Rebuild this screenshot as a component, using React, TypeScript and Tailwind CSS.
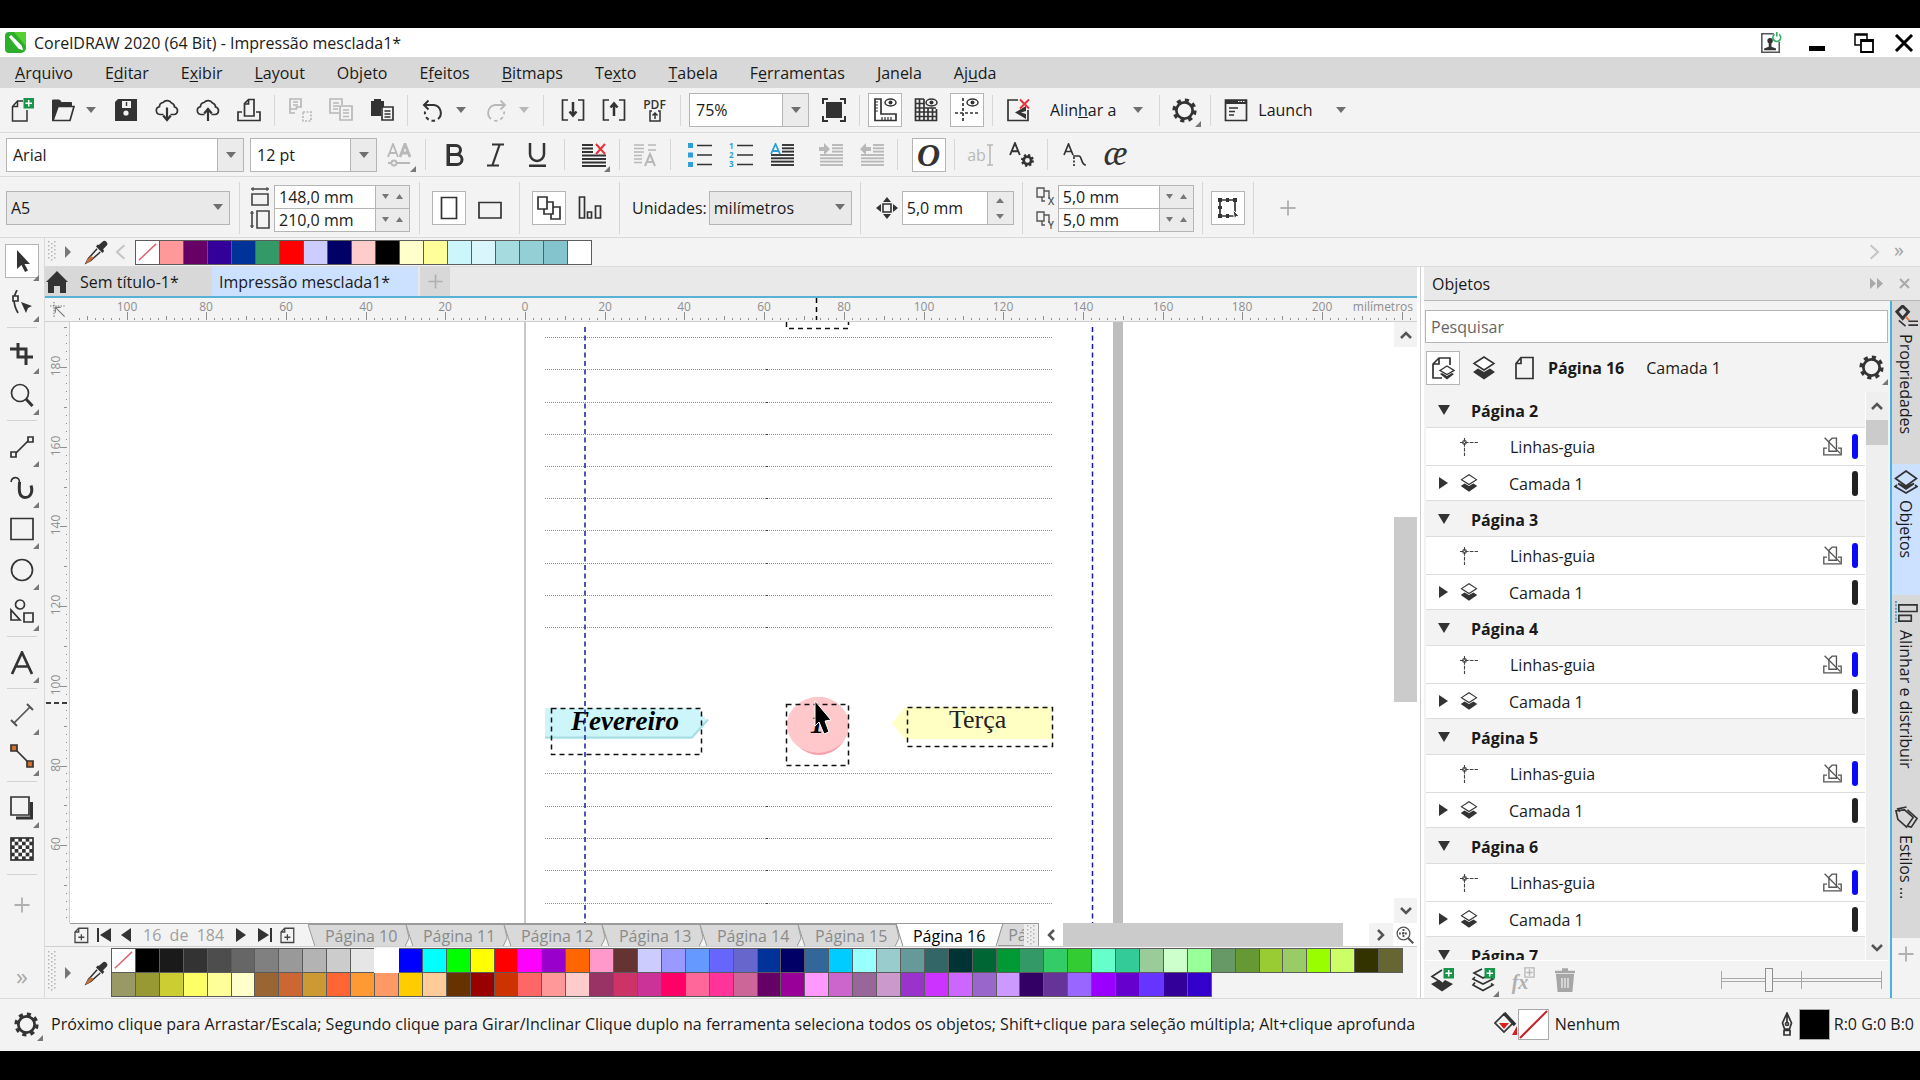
import React from "react";

const DARK = "#333333";
const GREY = "#b8b8b8";

type SvgProps = { children?: React.ReactNode; size?: number; color?: string; sw?: number; className?: string };

function Ic({ children, size = 24, color = DARK, sw = 1.7, className }: SvgProps) {
  return (
    <svg className={className} width={size} height={size} viewBox="0 0 24 24" fill="none" stroke={color} strokeWidth={sw} aria-hidden="true">
      {children}
    </svg>
  );
}

function Down({ color = "#6f6f6f" }: { color?: string }) {
  return (
    <svg width="10" height="6" viewBox="0 0 10 6" aria-hidden="true">
      <path d="M0 0h10L5 6z" fill={color} />
    </svg>
  );
}

function Flyout() {
  return (
    <svg className="absolute right-1 bottom-0" width="6" height="6" viewBox="0 0 6 6" aria-hidden="true">
      <path d="M6 0v6H0z" fill="#777" />
    </svg>
  );
}

function Cell({ label, children, on, flyout, className = "" }: { label: string; children: React.ReactNode; on?: boolean; flyout?: boolean; className?: string }) {
  return (
    <button type="button" aria-label={label} className={`relative flex h-[34px] w-[41px] shrink-0 items-center justify-center ${className}`}>
      {on ? <span className="flex h-[34px] w-[34px] items-center justify-center border border-[#b5b5b5] bg-white">{children}</span> : children}
      {flyout && <Flyout />}
    </button>
  );
}

function Arrow({ label, color }: { label: string; color?: string }) {
  return (
    <button type="button" aria-label={label} className="mr-1.5 flex h-8 w-4 shrink-0 items-center justify-center">
      <Down color={color} />
    </button>
  );
}

function Sep({ tall }: { tall?: boolean }) {
  return (
    <div className="flex w-2.5 shrink-0 justify-center">
      <div className={tall ? "h-[52px] w-px bg-[#d6d6d6]" : "h-[31px] w-px bg-[#d6d6d6]"} />
    </div>
  );
}

function Combo({ label, value, className }: { label: string; value: string; className: string }) {
  return (
    <div className={`flex h-[34px] shrink-0 border border-[#b5b5b5] bg-white ${className}`}>
      <input aria-label={label} defaultValue={value} className="min-w-0 flex-1 px-1.5 outline-none" />
      <button type="button" aria-label={`${label}: abrir lista`} className="flex w-[26px] items-center justify-center border-l border-[#b5b5b5] bg-[#ebebeb]">
        <Down />
      </button>
    </div>
  );
}

function Select({ id, value, className }: { id: string; value: string; className: string }) {
  return (
    <div className={`relative h-[34px] shrink-0 border border-[#b5b5b5] bg-[#e9e9e9] ${className}`}>
      <select id={id} aria-label={id} className="h-full w-full appearance-none bg-transparent px-1 outline-none">
        <option>{value}</option>
      </select>
      <span className="pointer-events-none absolute top-3 right-1.5">
        <Down />
      </span>
    </div>
  );
}

function PairInputs({ a, b, va, vb }: { a: string; b: string; va: string; vb: string }) {
  return (
    <div className="w-[136px] shrink-0 border border-[#b5b5b5]">
      {[[a, va], [b, vb]].map(([label, v], i) => (
        <div key={label} className={i === 0 ? "flex h-[23px] border-b border-[#b5b5b5] bg-white" : "flex h-[22px] bg-white"}>
          <input aria-label={label} defaultValue={v} className="min-w-0 flex-1 px-1 outline-none" />
          <div className="flex w-[34px] items-center justify-around border-l border-[#b5b5b5] bg-[#ebebeb] px-0.5">
            <button type="button" aria-label={`${label} menos`}>
              <svg width="7" height="5" viewBox="0 0 7 5"><path d="M0 0h7L3.500 5z" fill="#777" /></svg>
            </button>
            <button type="button" aria-label={`${label} mais`}>
              <svg width="7" height="5" viewBox="0 0 7 5"><path d="M0 5h7L3.500 0z" fill="#777" /></svg>
            </button>
          </div>
        </div>
      ))}
    </div>
  );
}

const Plus = ({ size = 20 }: { size?: number }) => (
  <Ic size={size} color="#b0b0b0" sw={2.4}><path d="M12 2v20M2 12h20" /></Ic>
);

const Badge = () => (
  <g>
    <rect x="13.500" y="0" width="10.500" height="10.500" fill="#17964a" stroke="none" />
    <path d="M18.700 2v6.500M15.500 5.200h6.500" stroke="#fff" strokeWidth="1.500" />
  </g>
);

const Gear = ({ size = 25 }: { size?: number }) => (
  <Ic size={size}>
    <circle cx="12" cy="12" r="7.800" strokeWidth="2.600" />
    <circle cx="12" cy="12" r="10" strokeWidth="3.200" strokeDasharray="3.930 3.930" />
  </Ic>
);

const Cloud = ({ up }: { up?: boolean }) => (
  <Ic>
    <path d="M8.500 16.500H5a4 4 0 0 1-.5-7.900A4.300 4.300 0 0 1 8 4.500 5.300 5.300 0 0 1 16.500 5a4.200 4.200 0 0 1 3 4A3.800 3.800 0 0 1 19 16.500h-3.500" />
    {up ? <path d="M12 23V11.500M8.200 15.500l3.800-4.500 3.800 4.500" strokeWidth="2.200" /> : <path d="M12 9.500V21.500M8.200 17.500l3.800 4.500 3.800-4.500" strokeWidth="2.200" />}
  </Ic>
);

const Layers = ({ size = 24, open }: { size?: number; open?: boolean }) => (
  <Ic size={size}>
    {open ? (
      <>
        <path d="M3 15l-2 1.500L12 23l11-6.500-2-1.500" />
        <path d="M4 13.500L12 19l8-5.500-8 3z" fill={DARK} />
        <path d="M1.500 8.500L12 1l10.500 7.500L12 16z" fill="#cce0ff" />
      </>
    ) : (
      <>
        <path d="M1 16l5-3.500L12 16l6-3.500 5 3.500-11 7.500z" fill={DARK} stroke="none" />
        <path d="M2 7.500L12 1l10 6.500L12 14z" fill="#fff" strokeWidth="1.500" />
      </>
    )}
  </Ic>
);

const Eyedropper = () => (
  <Ic size={26}>
    <path d="M13 9 5 18l-2 4 4-2 9-8" fill="#f0f0f0" strokeWidth="1.400" />
    <path d="M7 16l-3 3-1.500 3.500L6 21l4-4z" fill="#c4703c" stroke="none" />
    <path d="M12 7l6 6 1.500-2-1-1.500 3-3a2.500 2.500 0 0 0-3.500-4l-3.500 3L13.500 5z" fill={DARK} stroke="none" />
  </Ic>
);

const Lines = ({ from = 0, color = DARK }: { from?: number; color?: string }) => (
  <g stroke={color} strokeWidth="1.900">
    {[2, 5.3, 8.600].map((y) => <path key={y} d={`M${from} ${y}H24`} />)}
    {[12, 15.300, 18.600, 22].map((y) => <path key={y} d={`M1 ${y}H24`} />)}
  </g>
);

const menus: [string, string, string][] = [
  ["", "A", "rquivo"], ["E", "d", "itar"], ["E", "x", "ibir"], ["", "L", "ayout"], ["Ob", "j", "eto"], ["E", "f", "eitos"],
  ["", "B", "itmaps"], ["Te", "x", "to"], ["", "T", "abela"], ["F", "e", "rramentas"], ["", "J", "anela"], ["Aj", "u", "da"],
];

function TitleBar() {
  return (
    <header className="flex h-[29px] shrink-0 items-center bg-white pr-1.5 pl-1">
      <svg width="23" height="23" viewBox="0 0 23 23" aria-hidden="true">
        <path d="M5 1h17v16a5 5 0 0 1-5 5H5a4 4 0 0 1-4-4V5a4 4 0 0 1 4-4z" fill="#2fae2c" />
        <path d="M10 1h12v14z" fill="#57cf2f" />
        <path d="M6 6l1-1 10 10 1 3-3-1z" fill="#fff" stroke="#fff" strokeWidth="1.500" />
      </svg>
      <h1 className="ml-[7px] flex-1">CorelDRAW 2020 (64 Bit) - Impressão mesclada1*</h1>
      <button type="button" aria-label="Conta" className="mr-[27px]">
        <Ic size={22} color="#555"><path d="M15 2H2v20h19V11" /><circle cx="11" cy="9.500" r="3" fill={DARK} stroke="none" /><path d="M9.500 11h3v5l5 2v2h-13v-2l5-2z" fill={DARK} stroke="none" /><path d="M15.800 2.500a4.300 4.300 0 1 0 5 0M18.300 0v5" stroke="#35ad68" /></Ic>
      </button>
      <button type="button" aria-label="Minimizar" className="mt-3 mr-[29px] h-[5px] w-4 bg-black" />
      <button type="button" aria-label="Restaurar" className="mr-[20px]">
        <svg width="20" height="20" viewBox="0 0 20 20" fill="none" stroke="#000" strokeWidth="1.500"><path d="M6 12H1V1h12v5M1 2h12" /><path d="M7 7h12v12H7zM7 8h12" strokeWidth="1.800" /></svg>
      </button>
      <button type="button" aria-label="Fechar">
        <svg width="20" height="18" viewBox="0 0 20 18" stroke="#000" strokeWidth="3"><path d="M2 1l16 16M18 1L2 17" /></svg>
      </button>
    </header>
  );
}

function StandardBar() {
  return (
    <div className="flex h-[45px] shrink-0 items-center border-b border-[#dadada] bg-[#f3f3f3] pl-px">
      <Cell label="Novo"><Ic><path d="M13 3H7.500L2.500 8.500V23h14.500V12M7.500 3v5.500h-5" strokeWidth="1.500" /><Badge /></Ic></Cell>
      <Cell label="Abrir"><Ic><path d="M1.500 22V2h7l2 2.500h10V8H7z" fill={DARK} stroke={DARK} strokeWidth="1" /><path d="M7 8.500h16l-4 14H2z" fill="#f3f3f3" /></Ic></Cell>
      <Arrow label="Abrir recentes" />
      <Cell label="Salvar"><Ic><path d="M4 1h19v22H1V4z" fill={DARK} stroke="none" /><path d="M8 3h9v7H8z" fill="#f3f3f3" stroke="none" /><path d="M12.500 4v4" strokeWidth="1.400" /><circle cx="12" cy="15" r="2.600" fill="#f3f3f3" stroke="none" /></Ic></Cell>
      <Cell label="Baixar da nuvem"><Cloud /></Cell>
      <Cell label="Salvar na nuvem"><Cloud up /></Cell>
      <Cell label="Imprimir"><Ic><path d="M5 14H1v8.500h22V14h-4" /><path d="M7.500 18V5.500L11.500 1.500H17V18z" /><path d="M11.500 2v4h-4" /></Ic></Cell>
      <Sep />
      <Cell label="Recortar"><Ic color={GREY}><path d="M9 11H2V1h11v8H8.500v2M5 4h5M5 7h5" /><path d="M15 14h8v9h-8z" strokeDasharray="2 1.500" /><path d="M2 11v4h5" /></Ic></Cell>
      <Cell label="Copiar"><Ic color={GREY}><path d="M10 15H1V1h12v6M4 5h6M4 8h6M4 11h5" /><path d="M11 8h12v14H11zM14 12h6M14 15h6M14 18.500h6" /></Ic></Cell>
      <Cell label="Colar"><Ic><path d="M1 3h3V1h7v2h3v7h-3v8H1z" fill={DARK} stroke="none" /><path d="M12 9h11v13H12z" fill="#f3f3f3" /><path d="M14.500 13h6M14.500 16h6M14.500 19h6" /></Ic></Cell>
      <Sep />
      <Cell label="Desfazer"><Ic sw={2}><path d="M4 7h9a8 8 0 0 1 4 14" /><path d="M7.500 2.500L3 7l4.500 4.500" /><path d="M14 22.500a8 8 0 0 1-10-9" strokeDasharray="3.500 3" /></Ic></Cell>
      <Arrow label="Histórico de desfazer" />
      <Cell label="Refazer"><Ic sw={1.800} color={GREY}><path d="M20 7h-9a8 8 0 0 0-4 14" /><path d="M16.500 2.500L21 7l-4.500 4.500" /><path d="M10 22.500a8 8 0 0 0 10-9" strokeDasharray="3.500 3" /></Ic></Cell>
      <Arrow label="Histórico de refazer" color={GREY} />
      <Sep />
      <Cell label="Importar" className="ml-1"><Ic><path d="M7 2H1.500v20H7M17 2h5.500v20H17" /><path d="M12 4v13M8.500 13.500L12 17.500l3.500-4" strokeWidth="2.500" /></Ic></Cell>
      <Cell label="Exportar"><Ic><path d="M7 2H1.500v20H7M17 2h5.500v20H17" /><path d="M12 18V6M8.500 9.500L12 5.500l3.500 4" strokeWidth="2.500" /></Ic></Cell>
      <Cell label="Publicar em PDF" className="flex-col">
        <span className="text-[12px] leading-[11px] font-semibold text-[#333]">PDF</span>
        <svg width="12" height="12" viewBox="0 0 12 12" fill="none" stroke={DARK} strokeWidth="1.500"><path d="M3 1H1v10h10V1H9M6 9V3M3.500 5.500L6 3l2.500 2.500" /></svg>
      </Cell>
      <Sep />
      <Combo label="Zoom" value="75%" className="ml-1 w-[120px]" />
      <Cell label="Visualizar em tela cheia" className="ml-1"><Ic><path d="M1 6V1h5M18 1h5v5M23 18v5h-5M6 23H1v-5" strokeWidth="2" /><rect x="4" y="4" width="16" height="16" fill={DARK} stroke="none" /></Ic></Cell>
      <Sep />
      <Cell label="Mostrar réguas" on><Ic><path d="M2 1h6v15h15v6.500H2z" /><path d="M2 4h3M2 7h3M2 10h3M2 13h3M9 22v-3M12 22v-3M15 22v-3M18 22v-3" strokeWidth="1.200" /><ellipse cx="17.500" cy="4.500" rx="5.500" ry="3.500" strokeWidth="1.500" /><circle cx="17.500" cy="4.500" r="2" fill={DARK} stroke="none" /></Ic></Cell>
      <Cell label="Mostrar grade"><Ic><path d="M10 1H1.500v21.500h21V11M1 5.500h9M1 10h21M1 14h22M1 18.500h22M5.500 1v22M10 1v22M14 10v13M18.500 10v13" /><ellipse cx="17.500" cy="4.500" rx="5.500" ry="3.500" strokeWidth="1.500" /><circle cx="17.500" cy="4.500" r="2" fill={DARK} stroke="none" /></Ic></Cell>
      <Cell label="Mostrar linhas-guia" on><Ic><path d="M8 0v24M0 15h24" strokeDasharray="3 2" /><ellipse cx="17.500" cy="4.500" rx="5.500" ry="3.500" strokeWidth="1.500" /><circle cx="17.500" cy="4.500" r="2" fill={DARK} stroke="none" /></Ic></Cell>
      <Sep />
      <Cell label="Desativar alinhamento"><Ic><path d="M12 2H2v20.500h20V12" /><path d="M20 8L9 14.500l11 6.500V16l-5-1.500 5-1.500z" fill={DARK} stroke="none" /><path d="M14 1.500l9 9M23 1.500l-9 9" stroke="#e8323a" strokeWidth="2" /></Ic></Cell>
      <button type="button" className="ml-3 shrink-0">Alin<u>h</u>ar a</button>
      <button type="button" aria-label="Opções de alinhamento" className="mr-2 ml-3.5 flex h-8 w-4 items-center justify-center"><Down /></button>
      <Sep />
      <Cell label="Opções" flyout><Gear /></Cell>
      <Sep />
      <Cell label="Iniciador"><Ic><path d="M1.500 2h21v20.500h-21z" /><path d="M1 4h22" strokeWidth="4" /><path d="M5 10h9M5 13.500h6M5 17h5" strokeWidth="1.500" /><path d="M14 3.500h7" stroke="#fff" strokeWidth="1.200" strokeDasharray="1.500 1" /></Ic></Cell>
      <button type="button" className="ml-0.5 shrink-0">Launch</button>
      <button type="button" aria-label="Opções do iniciador" className="ml-5 flex h-8 w-4 items-center justify-center"><Down /></button>
    </div>
  );
}

function TextBar() {
  return (
    <div className="flex h-11 shrink-0 items-center border-b border-[#dadada] bg-[#f3f3f3] pl-1.5">
      <Combo label="Fonte" value="Arial" className="w-[238px]" />
      <Combo label="Tamanho da fonte" value="12 pt" className="mr-0.5 ml-1.5 w-[127px]" />
      <Cell label="Fontes variáveis" flyout>
        <svg width="26" height="24" viewBox="0 0 26 24" fill="none" stroke={GREY} strokeWidth="1.800"><path d="M1 14L6 1l5 13M3 10h6" /><path d="M13 14l5-13 5 13M15 10h6" strokeWidth="2.800" /><path d="M1 20h22" strokeWidth="2" /><circle cx="7" cy="20" r="2.500" fill="#f3f3f3" /></svg>
      </Cell>
      <Sep />
      <Cell label="Negrito" className="ml-1"><Ic sw={3}><path d="M5 2.500h8a4.300 4.300 0 0 1 0 9H5zM5 11.500h9a5 5 0 0 1 0 10H5zM5.500 2v20" /></Ic></Cell>
      <Cell label="Itálico"><Ic sw={2.200}><path d="M8 1.500h12M3 22.500h12M15.500 2L8.500 22" /></Ic></Cell>
      <Cell label="Sublinhado"><Ic sw={2.500}><path d="M5 0v11a7 7 0 0 0 14 0V0M4 22.800h17" /></Ic></Cell>
      <div className="w-0.5" />
      <Sep />
      <Cell label="Alinhamento do texto" flyout className="ml-1"><Ic><g strokeWidth="2"><path d="M0 2h11M0 5.500h11M0 9h11M0 12.500h24M0 16h24M0 19.500h24M0 23h24" /></g><path d="M14 1l9 10M23 1l-9 10" stroke="#e8323a" strokeWidth="2" /></Ic></Cell>
      <Sep />
      <Cell label="Capitular"><Ic color={GREY}><path d="M1 2h10M1 5.500h10M1 9h10M1 12.500h8M1 16h8M1 19.500h8M15 2h8M15 7h8" /><path d="M12 23l5-12 5 12M14 19h6" strokeWidth="2" /></Ic></Cell>
      <Sep />
      <Cell label="Lista com marcadores" className="ml-1"><Ic><path d="M9 2.500h15M9 12h15M9 21.500h15" /><path d="M0 2.500h5M0 12h5M0 21.500h5" stroke="#2f9fd8" strokeWidth="5" /></Ic></Cell>
      <Cell label="Lista numerada"><Ic><path d="M8 2.500h16M8 12h16M8 21.500h16" /><g fill="#2f9fd8" stroke="none" fontSize="8" fontWeight="700" fontFamily="Open Sans"><text x="0" y="6">1</text><text x="0" y="15">2</text><text x="0" y="24">3</text></g></Ic></Cell>
      <Cell label="Letra inicial"><Ic><Lines from={12} /><path d="M1 11L5.500 1 10 11M2.500 8h6" stroke="#2f9fd8" strokeWidth="1.800" /></Ic></Cell>
      <Cell label="Aumentar recuo" className="ml-2"><Ic color={GREY}><Lines from={13} color={GREY} /><path d="M0 4h5V0l6 6-6 6V8H0z" fill={GREY} stroke="none" /></Ic></Cell>
      <Cell label="Diminuir recuo"><Ic color={GREY}><Lines from={13} color={GREY} /><path d="M11 4H6V0L0 6l6 6V8h5z" fill={GREY} stroke="none" /></Ic></Cell>
      <Sep />
      <Cell label="Recursos OpenType" on className="ml-1.5"><span className="font-['Liberation_Serif'] text-[32px] leading-7 font-bold text-[#333] italic">O</span></Cell>
      <Sep />
      <Cell label="Editar texto" className="ml-px"><span className="text-[#b8b8b8]">ab</span><svg width="8" height="22" viewBox="0 0 8 22" fill="none" stroke={GREY} strokeWidth="1.500"><path d="M1 1h6M1 21h6M4 1v20" /></svg></Cell>
      <Cell label="Propriedades do texto"><Ic size={26}><path d="M1 12L5.500 1 10 12M2.500 8.500h6" /><circle cx="17" cy="17" r="3.500" strokeWidth="2.600" /><circle cx="17" cy="17" r="5" strokeWidth="2" strokeDasharray="2 1.930" /></Ic></Cell>
      <Sep />
      <Cell label="Texto em caminho" className="ml-0.5"><Ic><path d="M1 12L5.500 1 10 12M2.500 8.500h6" /><path d="M10 13h6c3 0 2 9 7 9" /><path d="M11 14v9" strokeDasharray="2 1.500" /></Ic></Cell>
      <Cell label="Glifos"><span className="pb-1 font-['Liberation_Serif'] text-[36px] leading-6 text-[#333] italic">æ</span></Cell>
    </div>
  );
}

const DupIcon = ({ axis }: { axis: string }) => (
  <svg width="20" height="20" viewBox="0 0 20 20" fill="none" stroke="#555" strokeWidth="1.400" aria-hidden="true">
    <path d="M1 2h7v9H1zM8 5h5v8M6 11v4h3" />
    <text x="12" y="19" fontSize="10" fontWeight="600" fontFamily="Open Sans" fill="#555" stroke="none">{axis}</text>
  </svg>
);

function PropertyBar() {
  return (
    <div className="flex h-[61px] shrink-0 items-center border-b border-[#dadada] bg-[#f3f3f3] pt-0.5 pl-1.5">
      <Select id="Tamanho da página" value="A5" className="mr-1 w-[224px]" />
      <Sep tall />
      <svg className="mr-1 ml-1.5 shrink-0" width="20" height="42" viewBox="0 0 20 42" fill="none" stroke="#444" strokeWidth="1.600" aria-hidden="true">
        <path d="M1 2h18M2 7h16v11H2z" /><path d="M7 24h12v17H7zM2 24v17" /><path d="M3 0v4M17 0v4M0 26h4M0 39h4" strokeWidth="1" />
      </svg>
      <PairInputs a="Largura da página" b="Altura da página" va="148,0 mm" vb="210,0 mm" />
      <div className="w-1" />
      <Sep tall />
      <Cell label="Retrato" on className="ml-1"><Ic><path d="M4.500 1.500h15v21h-15z" /></Ic></Cell>
      <Cell label="Paisagem"><Ic><path d="M1 6.500h22V22H1z" /></Ic></Cell>
      <div className="w-1" />
      <Sep tall />
      <Cell label="Todas as páginas" on className="ml-1"><Ic><path d="M1 1h9v12H1z" /><path d="M10 6h6v12H7v-5M16 11h7v12h-9v-5" /></Ic></Cell>
      <Cell label="Página atual"><Ic><path d="M1.500 1h5v21h-5zM9.500 16h4v6h-4zM17.500 10h5v12h-5z" /></Ic></Cell>
      <div className="w-1" />
      <Sep tall />
      <label htmlFor="Unidades" className="mr-0.5 ml-2 shrink-0">Unidades:</label>
      <Select id="Unidades" value="milímetros" className="mr-1 w-[143px]" />
      <Sep tall />
      <svg className="mr-1 ml-2.5 shrink-0" width="22" height="22" viewBox="0 0 22 22" fill={DARK} aria-hidden="true">
        <path d="M11 0l4 5H7zM11 22l4-5H7zM0 11l5-4v8zM22 11l-5-4v8z" /><path d="M7 7h8v8H7z" fill="none" stroke={DARK} strokeWidth="1.600" />
      </svg>
      <div className="mr-1 flex h-[34px] w-[112px] shrink-0 border border-[#b5b5b5] bg-white">
        <input aria-label="Distância de deslocamento" defaultValue="5,0 mm" className="min-w-0 flex-1 px-1 outline-none" />
        <div className="flex w-[26px] flex-col items-center justify-around border-l border-[#b5b5b5] bg-[#ebebeb]">
          <button type="button" aria-label="Aumentar deslocamento"><svg width="8" height="5" viewBox="0 0 8 5"><path d="M0 5h8L4 0z" fill="#777" /></svg></button>
          <button type="button" aria-label="Diminuir deslocamento"><svg width="8" height="5" viewBox="0 0 8 5"><path d="M0 0h8L4 5z" fill="#777" /></svg></button>
        </div>
      </div>
      <Sep tall />
      <div className="mr-0.5 ml-2 flex shrink-0 flex-col gap-1"><DupIcon axis="X" /><DupIcon axis="Y" /></div>
      <PairInputs a="Distância duplicada X" b="Distância duplicada Y" va="5,0 mm" vb="5,0 mm" />
      <div className="w-1" />
      <Sep tall />
      <Cell label="Tratar como preenchido" on><Ic><path d="M4 4h15v16H4z" /><path d="M2 4h4M10 4h3M17 4h4M2 20h4M10 20h3M4 10v3" strokeWidth="4" /><path d="M17 14l6 6-3 .5L18.500 23z" fill={DARK} stroke="#fff" strokeWidth="1" /></Ic></Cell>
      <Sep tall />
      <button type="button" aria-label="Personalizar barra" className="ml-5"><Plus size={18} /></button>
    </div>
  );
}

const Grip = ({ h }: { h: number }) => (
  <svg width="10" height={h} viewBox={`0 0 10 ${h}`} className="shrink-0" aria-hidden="true">
    {Array.from({ length: Math.floor(h / 4) }, (_, i) => (
      <g key={i} fill="#b4b4b4"><rect x="1" y={i * 4} width="1.500" height="1.500" /><rect x="7" y={i * 4} width="1.500" height="1.500" /><rect x="4" y={i * 4 + 2} width="1.500" height="1.500" /></g>
    ))}
  </svg>
);

const topColors = ["none", "#ff9999", "#660066", "#330099", "#003399", "#339966", "#ff0000", "#ccccff", "#000066", "#ffcccc", "#000000", "#ffffcc", "#ffff99", "#ccf6fc", "#d9f6fd", "#a6dbe0", "#95cfd6", "#84c4cd", "#ffffff"];
const row1 = "none 000000 1a1a1a 333333 4d4d4d 666666 808080 999999 b3b3b3 cccccc e6e6e6 ffffff 0000ff 00ffff 00ff00 ffff00 ff0000 ff00ff 9900cc ff6600 ff99cc 663333 ccccff 9999ff 6699ff 6666ff 6666cc 003399 000066 336699 00ccff 99ffff 99cccc 669999 336666 003333 006633 009933 339966 33cc66 33cc33 66ffcc 33cc99 99cc99 ccffcc 99ff99 669966 669933 99cc33 99cc66 99ff00 ccff66 333300 666633".split(" ");
const row2 = "999966 999933 cccc33 ffff66 ffff99 ffffcc 996633 cc6633 cc9933 ff6633 ff9933 ff9966 ffcc00 ffcc99 663300 990000 cc3300 ff6666 ff9999 ffcccc 993366 cc3366 cc3399 ff0066 ff6699 ff3399 cc6699 660066 990099 ff99ff cc66cc 996699 cc99cc 9933cc cc33ff cc66ff 9966cc cc99ff 330066 663399 9966ff 9900ff 6600cc 6633ff 330099 3300cc".split(" ");

function Swatch({ c, className = "border-[#5c5c5c]" }: { c: string; className?: string }) {
  const none = c === "none";
  return (
    <button type="button" aria-label={none ? "Sem cor" : c} className={`-mr-px h-[25px] border ${className}`} style={{ backgroundColor: none ? "#ffffff" : c }}>
      {none && <svg className="h-full w-full" viewBox="0 0 24 24" preserveAspectRatio="none"><path d="M3 20L21 3" stroke="#e06070" strokeWidth="1.500" /></svg>}
    </button>
  );
}

function DocPalette() {
  return (
    <div className="flex h-[29px] shrink-0 items-center border-b border-[#dadada] bg-[#f3f3f3] pr-4 pl-0.5">
      <Grip h={23} />
      <button type="button" aria-label="Menu da paleta" className="ml-2"><svg width="6" height="12" viewBox="0 0 6 12"><path d="M0 0l6 6-6 6z" fill="#777" /></svg></button>
      <button type="button" aria-label="Conta-gotas" className="ml-3"><Eyedropper /></button>
      <button type="button" aria-label="Anterior" className="mr-1.5 ml-1"><Ic size={16} color="#c4c4c4" sw={3}><path d="M17 2L6 12l11 10" /></Ic></button>
      <div className="flex pt-px">{topColors.map((c) => <Swatch key={c} c={c} className="w-[25px] border-[#5c5c5c]" />)}</div>
      <div className="flex-1" />
      <button type="button" aria-label="Próximo" className="mr-3"><Ic size={16} color="#c4c4c4" sw={3}><path d="M7 2l11 10L7 22" /></Ic></button>
      <button type="button" aria-label="Mais" className="pb-1 text-xl leading-5 text-[#a0a0a0]">»</button>
    </div>
  );
}

const Rule = () => <div className="my-[5px] h-px w-[30px] shrink-0 bg-[#d2d2d2]" />;

function Toolbox() {
  const t = "h-[41px]";
  return (
    <nav aria-label="Ferramentas de desenho" className="flex w-[45px] shrink-0 flex-col items-center border-r border-[#dadada] bg-[#f3f3f3] pt-0.5 pb-1.5">
      <Cell label="Seleção" on flyout className={t}><Ic><path d="M7 1v19l4.500-4 3.500 7 3-1.500L14.500 15H20z" fill={DARK} stroke="none" /></Ic></Cell>
      <Cell label="Forma" flyout className={t}><Ic><path d="M7 0C2 8 4 16 8 23" /><path d="M3 6h5v5H3z" fill="#f3f3f3" /><path d="M11 12l11 4-4 2-2 5z" fill={DARK} stroke="none" /></Ic></Cell>
      <Rule />
      <Cell label="Cortar" flyout className={t}><Ic sw={3}><path d="M8 1v14h15M0 7h16v16" /></Ic></Cell>
      <Cell label="Zoom" flyout className={t}><Ic><circle cx="10" cy="10" r="8.500" /><path d="M16 16l6.500 7" strokeWidth="3" /></Ic></Cell>
      <Rule />
      <Cell label="Mão livre" flyout className={t}><Ic><path d="M5 19L19 5" /><path d="M1 17h5v5H1zM18 2h5v5h-5z" fill="#f3f3f3" /></Ic></Cell>
      <Cell label="Mídia artística" flyout className={t}><Ic><path d="M1 6C2 0 10 0 9.500 7" strokeWidth="1.600" /><path d="M9.500 6c0 5-2 15 5.500 15.500 6 0 8-6 6-12" strokeWidth="3" /></Ic></Cell>
      <Cell label="Retângulo" flyout className={t}><Ic><path d="M1 1.500h22v21H1z" /></Ic></Cell>
      <Cell label="Elipse" flyout className={t}><Ic><circle cx="12" cy="12" r="10.500" /></Ic></Cell>
      <Cell label="Polígono" flyout className={t}><Ic><circle cx="10" cy="5.500" r="4.500" /><path d="M1 11v10h9zM14 14h9v9h-9z" /></Ic></Cell>
      <Rule />
      <Cell label="Texto" flyout className={t}><Ic sw={2.700}><path d="M2 23L12 1.500 22 23M6 15.500h12" /></Ic></Cell>
      <Rule />
      <Cell label="Dimensão" flyout className={t}><Ic color="#555"><path d="M4 20L20 4" /><path d="M1 17l6 6M17 1l6 6" strokeWidth="2" /></Ic></Cell>
      <Cell label="Conector" flyout className={t}><Ic><path d="M4 4l16 16" color="#555" /><path d="M1 1h6v6H1zM17 17h6v6h-6z" fill="#d06f28" /></Ic></Cell>
      <Rule />
      <Cell label="Sombreamento" flyout className={t}><Ic><path d="M1 1h18v18H1z" /><path d="M21.500 6v16H6" strokeWidth="3" /></Ic></Cell>
      <Cell label="Transparência" className={t}>
        <Ic>
          <rect x="1" y="1" width="22" height="22" fill="#fff" />
          {Array.from({ length: 36 }, (_, i) => { const x = i % 6; const y = Math.floor(i / 6); return (x + y) % 2 === 0 ? <rect key={i} x={1 + x * 3.670} y={1 + y * 3.670} width="3.670" height="3.670" fill={DARK} stroke="none" /> : null; })}
        </Ic>
      </Cell>
      <Rule />
      <button type="button" aria-label="Personalizar ferramentas" className="mt-4"><Plus size={18} /></button>
      <div className="flex-1" />
      <button type="button" aria-label="Mais ferramentas" className="pb-1 text-2xl leading-6 text-[#a8a8a8]">»</button>
    </nav>
  );
}

const MM = 3.985;

function TopRuler() {
  const ticks: React.ReactNode[] = [];
  for (let mm = -112; mm <= 224; mm += 2) {
    const x = Math.round(455 + mm * MM);
    if (mm % 20 === 0) ticks.push(<rect key={mm} x={x} y="14" width="1" height="8" />);
    else if (mm % 10 === 0) ticks.push(<rect key={mm} x={x} y="18" width="1" height="4" />);
    else ticks.push(<rect key={mm} x={x} y="20" width="1" height="2" />);
  }
  const labels: React.ReactNode[] = [];
  for (let mm = -100; mm <= 200; mm += 20) labels.push(<text key={mm} x={Math.round(455 + mm * MM)} y="13" textAnchor="middle">{Math.abs(mm)}</text>);
  return (
    <div className="flex h-6 shrink-0 border-b border-[#cfcfcf] bg-[#f3f3f3]">
      <div className="flex w-[25px] shrink-0 items-center justify-center">
        <Ic size={16} color="#777"><path d="M6 0v24M0 6h24" strokeDasharray="2 2" /><path d="M8 8l14 14M8 16V8h8" /></Ic>
      </div>
      <div className="relative min-w-0 flex-1 overflow-hidden">
        <svg width="100%" height="23" fill="#8f8f8f" fontSize="12" fontFamily="Open Sans, sans-serif">
          {ticks}
          {labels}
          <path d="M746.500 0v22" stroke="#000" strokeWidth="1.500" strokeDasharray="5 4" />
        </svg>
        <span className="absolute top-0 right-1 text-[12px] leading-[18px] text-[#8f8f8f]">milímetros</span>
      </div>
    </div>
  );
}

function SideRuler() {
  const ticks: React.ReactNode[] = [];
  const labels: React.ReactNode[] = [];
  for (let mm = 190; mm >= 40; mm -= 2) {
    const y = Math.round(45 + (180 - mm) * MM);
    if (mm % 20 === 0) ticks.push(<rect key={mm} x="15" y={y} width="7" height="1" />);
    else if (mm % 10 === 0) ticks.push(<rect key={mm} x="19" y={y} width="3" height="1" />);
    else ticks.push(<rect key={mm} x="21" y={y} width="1" height="1" />);
    if (mm % 20 === 0 && mm > 40) labels.push(<text key={mm} transform={`translate(15 ${y - 1}) rotate(-90)`} textAnchor="middle">{mm}</text>);
  }
  return (
    <svg className="h-full w-[25px] shrink-0 border-r border-[#cfcfcf] bg-[#f3f3f3]" fill="#8f8f8f" fontSize="12" fontFamily="Open Sans, sans-serif">
      {ticks}
      {labels}
      <path d="M1 381h21" stroke="#000" strokeWidth="1.500" strokeDasharray="5 3" />
    </svg>
  );
}

function Artboard() {
  const ys = [15, 47, 80, 112, 144, 176, 208, 241, 273, 305, 451, 484, 516, 548, 581];
  return (
    <svg className="h-full w-full" fill="none">
      <rect x="454" y="0" width="2" height="100%" fill="#c8c8c8" />
      <rect x="1043" y="0" width="10" height="100%" fill="#bebebe" />
      {ys.map((y, i) => (
        <g key={y}>
          <path d={`M475 ${y + 0.5}H983`} stroke="#8f8f8f" strokeDasharray="1 1" />
          {i !== 0 && i !== 10 && <rect x="696" y={y} width="2" height="1" fill="#444" />}
        </g>
      ))}
      <path d="M475 386h152l10 13-15 18H475z" fill="#ccf6fa" />
      <path d="M475 415.500h147l16-18" stroke="#a5dde2" strokeWidth="2" />
      <circle cx="749" cy="404" r="29" fill="#f79fa8" />
      <ellipse cx="748" cy="403" rx="31" ry="28" fill="#ffc9cb" />
      <path d="M822 401l13-16h147v32H835z" fill="#ffffc4" />
      <text x="501" y="408" fontFamily="Liberation Serif, serif" fontStyle="italic" fontWeight="700" fontSize="27" fill="#000">Fevereiro</text>
      <text x="740" y="411" fontFamily="Liberation Serif, serif" fontStyle="italic" fontWeight="700" fontSize="28" fill="#000">1</text>
      <text x="879" y="406" fontFamily="Liberation Serif, serif" fontSize="26" fill="#222">Terça</text>
      <g stroke="#111" strokeWidth="1.500" strokeDasharray="5 4">
        <path d="M716.500 0v6.500h62V0" />
        <path d="M481.500 386.500h150v46h-150z" />
        <path d="M716.500 382.500h62v61h-62z" />
        <path d="M837.500 385.500h145v39h-145z" />
      </g>
      <path d="M515 5V2000M1022.500 5V2000" stroke="#1c1a96" strokeWidth="1.500" strokeDasharray="5 3.500" />
      <path d="M745 379v25l4-4 5 12 5-2-4-11 6-1z" fill="#000" stroke="#fff" strokeWidth="1" />
    </svg>
  );
}

const Chevron = ({ d }: { d: string }) => (
  <svg width="12" height="12" viewBox="0 0 12 12" fill="none" stroke="#555" strokeWidth="2.500" aria-hidden="true"><path d={d} /></svg>
);

function PageTab({ label, active }: { label: string; active?: boolean }) {
  return (
    <button type="button" className={`relative h-6 w-[98px] shrink-0 ${active ? "z-10 text-black" : "text-[#8a8a8a]"}`}>
      <svg className="absolute top-0 left-0 overflow-visible" width="98" height="24" viewBox="0 0 98 24" aria-hidden="true">
        {active
          ? <path d="M-4 -1L3 22.500H96L103 -1" fill="#fff" stroke="#8f8f8f" />
          : <path d="M-4 .5L3 22.500H93L97 14 94 .5z" fill="#d9d9d9" stroke="#9a9a9a" />}
      </svg>
      <span className="relative">{label}</span>
    </button>
  );
}

function PageBar() {
  const doc = <Ic size={18} color="#444"><path d="M9 3H21v19H4V8zM9 3v5H4M12.500 11v8M8.500 15h8" /></Ic>;
  const txt = "flex h-full items-center";
  return (
    <div className="flex h-6 shrink-0 items-center border-b border-[#cfcfcf] bg-[#f3f3f3] pl-[25px]">
      <div className="flex h-full min-w-0 flex-1 border-t border-[#9a9a9a]">
        <button type="button" aria-label="Adicionar página antes" className={`${txt} ml-0.5`}>{doc}</button>
        <button type="button" aria-label="Primeira página" className={`${txt} ml-[7px]`}><svg width="14" height="14" viewBox="0 0 14 14" fill={DARK}><path d="M0 0h2v14H0zM14 0v14L3 7z" /></svg></button>
        <button type="button" aria-label="Página anterior" className={`${txt} ml-2.5`}><svg width="10" height="14" viewBox="0 0 10 14" fill={DARK}><path d="M10 0v14L0 7z" /></svg></button>
        <span className={`${txt} ml-3 text-[#a0a0a0]`}>16&nbsp; de&nbsp; 184</span>
        <button type="button" aria-label="Próxima página" className={`${txt} ml-3`}><svg width="10" height="14" viewBox="0 0 10 14" fill={DARK}><path d="M0 0v14l10-7z" /></svg></button>
        <button type="button" aria-label="Última página" className={`${txt} ml-3`}><svg width="14" height="14" viewBox="0 0 14 14" fill={DARK}><path d="M12 0h2v14h-2zM0 0v14l11-7z" /></svg></button>
        <button type="button" aria-label="Adicionar página depois" className={`${txt} mr-3 ml-1.5`}>{doc}</button>
        <div className="flex overflow-hidden pl-1">
          {[10, 11, 12, 13, 14, 15].map((n) => <PageTab key={n} label={`Página ${n}`} />)}
          <PageTab label="Página 16" active />
          <button type="button" aria-label="Página 17" className="h-[22px] w-[26px] overflow-hidden border-b border-[#9a9a9a] bg-[#d9d9d9] pl-2.5 text-left text-[#8a8a8a]">Pá</button>
          <div className="flex items-center border-r border-[#9a9a9a] bg-[#ededed] px-0.5"><Grip h={20} /></div>
        </div>
        <div className="-mt-px flex min-w-0 flex-1 items-center bg-white">
          <button type="button" aria-label="Rolar para a esquerda" className="flex w-6 shrink-0 justify-center"><Chevron d="M9 1L4 6l5 5" /></button>
          <div className="h-full flex-1 pr-[26px]"><div className="h-full bg-[#cbcbcb]" /></div>
          <button type="button" aria-label="Rolar para a direita" className="flex h-full w-6 shrink-0 items-center justify-center bg-[#f3f3f3]"><Chevron d="M3 1l5 5-5 5" /></button>
          <button type="button" aria-label="Navegador" className="flex w-6 shrink-0 justify-center"><Ic size={18} color="#555"><circle cx="10" cy="10" r="8.500" /><path d="M16 16l7 7" strokeWidth="3" /><path d="M10 4v12M4 10h12" strokeDasharray="2.500 1.500" strokeWidth="2.500" /></Ic></button>
        </div>
      </div>
    </div>
  );
}

function BottomPalette() {
  return (
    <div className="flex h-[51px] shrink-0 items-start bg-[#f3f3f3] pr-[15px] pl-0.5">
      <div className="flex h-full items-center">
        <Grip h={43} />
        <button type="button" aria-label="Menu da paleta RGB" className="ml-2"><svg width="6" height="12" viewBox="0 0 6 12"><path d="M0 0l6 6-6 6z" fill="#777" /></svg></button>
        <button type="button" aria-label="Conta-gotas da paleta" className="mr-0.5 ml-3"><Eyedropper /></button>
      </div>
      <div className="min-w-0 flex-1 pt-px">
        <div className="grid grid-cols-[repeat(54,minmax(0,1fr))]">{row1.map((c) => <Swatch key={c} c={c === "none" ? c : `#${c}`} className={c === "ffffff" ? "z-10 border-white" : "border-[#5c5c5c]"} />)}</div>
        <div className="-mt-px grid grid-cols-[repeat(54,minmax(0,1fr))]">{row2.map((c) => <Swatch key={c} c={`#${c}`} />)}</div>
      </div>
    </div>
  );
}

function Workspace() {
  return (
    <section className="flex min-w-0 flex-1 flex-col">
      <div role="tablist" className="flex h-[31px] shrink-0 items-stretch border-b-2 border-[#5ab1d6] bg-[#e9e9e9]">
        <button type="button" aria-label="Início" className="flex w-[27px] items-center bg-[#d8d8d8]">
          <svg width="24" height="24" viewBox="0 0 24 24" fill={DARK}><path d="M12 1l11 11h-2v11h-6v-7H9v7H3V12H1z" /></svg>
        </button>
        <button type="button" role="tab" className="w-[140px] bg-[#d8d8d8] pl-2 text-left">Sem título-1*</button>
        <button type="button" role="tab" aria-selected="true" className="w-[206px] bg-[#cce0ff] pl-[7px] text-left">Impressão mesclada1*</button>
        <button type="button" aria-label="Novo documento" className="ml-0.5 flex w-[30px] items-center justify-center bg-[#d8d8d8]"><Plus size={17} /></button>
      </div>
      <TopRuler />
      <div className="flex min-h-0 flex-1">
        <SideRuler />
        <div className="relative min-w-0 flex-1 overflow-hidden bg-white"><div className="absolute inset-0"><Artboard /></div></div>
        <div className="flex w-[23px] shrink-0 flex-col bg-white">
          <button type="button" aria-label="Rolar para cima" className="flex h-[25px] items-center justify-center bg-[#f3f3f3]"><Chevron d="M1 9l5-5 5 5" /></button>
          <div className="flex-[170]" />
          <div className="flex-[185] bg-[#cbcbcb]" />
          <div className="flex-[196]" />
          <button type="button" aria-label="Rolar para baixo" className="flex h-[25px] items-center justify-center bg-[#f3f3f3]"><Chevron d="M1 3l5 5 5-5" /></button>
        </div>
      </div>
      <PageBar />
      <BottomPalette />
    </section>
  );
}

const Tri = ({ right }: { right?: boolean }) => (
  <svg width="12" height="12" viewBox="0 0 12 12" fill={DARK} aria-hidden="true"><path d={right ? "M2 0v12l9-6z" : "M0 1h12L6 11z"} /></svg>
);

function PageGroup({ n }: { n: number }) {
  const row = "flex items-center border-b border-[#dcdcdc] pr-[7px]";
  return (
    <li>
      <div className="flex h-9 items-center border-b border-[#dcdcdc] bg-[#f3f3f3]">
        <button type="button" aria-label={`Recolher Página ${n}`} className="flex w-[35px] justify-center"><Tri /></button>
        <span className="ml-[10px] pt-0.5 font-bold">Página {n}</span>
      </div>
      <div className={`${row} h-[38px] bg-white`}>
        <span className="w-[34px]" />
        <Ic size={18} color="#444" sw={1.500}><path d="M6 0v24M0 6h24" strokeDasharray="5 1.500" /><circle cx="6" cy="6" r="2.500" /></Ic>
        <span className="ml-8 flex-1">Linhas-guia</span>
        <Ic size={19} color="#555"><path d="M5 14H1v8.500h22V14h-4" /><path d="M7.500 18V5.500L11.500 1.500H17V18z" /><path d="M2 1l20 20" /></Ic>
        <span className="ml-2.5 h-[25px] w-1.5 rounded-full bg-[#0a0af5]" />
      </div>
      <div className={`${row} h-[35px] bg-white`}>
        <button type="button" aria-label={`Expandir Camada 1 da Página ${n}`} className="flex w-[34px] justify-center"><Tri right /></button>
        <Layers size={18} />
        <span className="ml-[31px] flex-1 pt-0.5">Camada 1</span>
        <span className="h-[25px] w-1.5 rounded-full bg-[#222]" />
      </div>
    </li>
  );
}

const vert = "[writing-mode:vertical-rl]";

function Docker() {
  return (
    <aside className="flex w-[496px] shrink-0 flex-col bg-[#f3f3f3]">
      <div className="flex h-[34px] shrink-0 items-center border-b border-[#b5b9bb] bg-[#e9e9e9] pr-2.5 pl-2">
        <h2 className="flex-1">Objetos</h2>
        <button type="button" aria-label="Recolher painel" className="mr-4"><svg width="13" height="11" viewBox="0 0 13 11" fill="#a9a9a9"><path d="M0 0l6 5.500L0 11zM7 0l6 5.500L7 11z" /></svg></button>
        <button type="button" aria-label="Fechar painel"><svg width="11" height="11" viewBox="0 0 11 11" stroke="#a9a9a9" strokeWidth="2"><path d="M1 1l9 9M10 1l-9 9" /></svg></button>
      </div>
      <div className="flex min-h-0 flex-1">
        <div className="flex min-w-0 flex-1 flex-col pr-0.5 pl-px">
          <input aria-label="Pesquisar" placeholder="Pesquisar" className="mt-[9px] h-[33px] w-full shrink-0 border border-[#b5b5b5] bg-white px-[5px] outline-none placeholder:text-[#666]" />
          <div className="flex h-[49px] shrink-0 items-center">
            <Cell label="Exibir páginas e camadas" on className="-ml-[3px]"><Ic><path d="M19 9V2H8L2 8v14h9M8 2v6H2" /><path d="M9 14.500l7-4.500 7 4.500-7 4z" strokeWidth="1.400" /><path d="M9 18l2-1 5 3 5-3 2 1-7 5.500z" fill={DARK} stroke="none" /></Ic></Cell>
            <Cell label="Exibir camadas"><Layers /></Cell>
            <Cell label="Página"><Ic><path d="M8 1.500h12v21H3v-15zM8 1.500v6H3" /></Ic></Cell>
            <span className="ml-[3px] font-bold">Página 16</span>
            <span className="ml-[22px] flex-1">Camada 1</span>
            <Cell label="Opções do painel" flyout className="-mr-1"><Gear /></Cell>
          </div>
          <div className="flex min-h-0 flex-1 pl-px">
            <ul className="min-w-0 flex-1 overflow-hidden">
              {[2, 3, 4, 5, 6, 7].map((n) => <PageGroup key={n} n={n} />)}
            </ul>
            <div className="flex w-[23px] shrink-0 flex-col border-l border-white bg-[#efefef]">
              <button type="button" aria-label="Lista para cima" className="flex h-7 items-center justify-center"><Chevron d="M1 9l5-5 5 5" /></button>
              <div className="h-[25px] bg-[#cbcbcb]" />
              <div className="flex-1" />
              <button type="button" aria-label="Lista para baixo" className="flex h-6 items-center justify-center"><Chevron d="M1 3l5 5 5-5" /></button>
            </div>
          </div>
          <div className="flex h-[38px] shrink-0 items-center border-t border-white pr-1.5">
            <Cell label="Nova camada" className="-ml-1"><Ic><path d="M12 2L2 8.500 12 15" /><path d="M1 16l8-4 3 3 3-3 8 4-11 7.500z" fill={DARK} stroke="none" /><Badge /></Ic></Cell>
            <Cell label="Nova camada mestra" flyout><Ic><path d="M11 1L3 5l9 5 4-2M4 9l-2 2 10 5 10-5-2-1M4 14.500L2 17l10 5.500L22 17l-2-1.500" /><Badge /></Ic></Cell>
            <Cell label="Novo efeito"><span className="pt-1 font-['Liberation_Serif'] text-xl font-bold text-[#b0b0b0] italic">fx</span><Ic size={11} color={GREY} className="mt-1 -ml-1 self-start" sw={3}><path d="M2 2h20v20H2zM12 5v14M5 12h14" /></Ic></Cell>
            <Cell label="Excluir"><Ic color="#a6a6a6" sw={2}><path d="M2 4h20M9 1.500h6" strokeWidth="2.500" /><path d="M4 7h16l-1.500 16h-13z" fill="#a6a6a6" /><path d="M9 10v10M12 10v10M15 10v10" stroke="#f3f3f3" strokeWidth="1.200" /></Ic></Cell>
            <div className="flex-1" />
            <div className="relative h-6 w-[161px]">
              <svg className="absolute inset-0 h-full w-full" viewBox="0 0 161 24" stroke="#a9a9a9"><path d="M.5 3v18M160.500 3v18M80.500 3v18M0 10.500h161M0 13.500h161" /></svg>
              <input type="range" aria-label="Tamanho das linhas" defaultValue={29} className="absolute inset-0 h-full w-full appearance-none bg-transparent [&::-webkit-slider-thumb]:h-6 [&::-webkit-slider-thumb]:w-2 [&::-webkit-slider-thumb]:appearance-none [&::-webkit-slider-thumb]:border [&::-webkit-slider-thumb]:border-[#8f8f8f] [&::-webkit-slider-thumb]:bg-[#f3f3f3]" />
            </div>
          </div>
        </div>
        <div className="flex w-[30px] shrink-0 flex-col border-l-2 border-[#4fb0dc]">
          <button type="button" className="flex h-[163px] flex-col items-center gap-1.5 bg-[#d8d8d8] pt-1">
            <Ic size={23}><path d="M8 1l6 6-6 7-6-7z" strokeWidth="3" /><path d="M11 12l4 4" stroke="#e07a4a" strokeWidth="2" /><path d="M4 16l7 6M14 17h10M14 21h10" /></Ic>
            <span className={vert}>Propriedades</span>
          </button>
          <button type="button" className="flex h-[131px] flex-col items-center gap-1.5 bg-[#cce0ff] pt-1.5">
            <Layers open />
            <span className={vert}>Objetos</span>
          </button>
          <button type="button" className="flex h-[205px] flex-col items-center gap-1.5 bg-[#d8d8d8] pt-1.5">
            <Ic size={23}><path d="M1 0v24" stroke="#2f9fd8" strokeDasharray="2 1.500" /><path d="M4 4h19v7H4zM4 15h13v6H4z" /></Ic>
            <span className={vert}>Alinhar e distribuir</span>
          </button>
          <button type="button" className="flex h-[138px] flex-col items-center gap-1.5 bg-[#d8d8d8] pt-1.5">
            <Ic size={23}><path d="M1 5l9-1 9 8-7 10-9-8z" /><path d="M13 4l10 9-6 9-4-1M12 1L3 3l2 3" /></Ic>
            <span className={vert}>Estilos ...</span>
          </button>
          <button type="button" aria-label="Adicionar painel" className="mt-[7px] flex justify-center"><Plus size={18} /></button>
        </div>
      </div>
    </aside>
  );
}

function StatusBar() {
  return (
    <footer className="flex h-[53px] shrink-0 items-center border-t border-[#dadada] bg-[#f3f3f3] pr-1.5 pb-0.5 pl-1.5">
      <Cell label="Configurações" flyout><Gear /></Cell>
      <p className="ml-1 flex-1 truncate">Próximo clique para Arrastar/Escala; Segundo clique para Girar/Inclinar Clique duplo na ferramenta seleciona todos os objetos; Shift+clique para seleção múltipla; Alt+clique aprofunda</p>
      <div className="flex w-[281px] shrink-0 items-center">
        <Ic><path d="M10 2l9 9-9 9-9-9z" /><path d="M10 1l11 12" strokeWidth="3.500" /><path d="M5 11h10l-5 6z" fill="#d81e1e" stroke="none" /><path d="M23 14v9h-5z" fill="#d81e1e" stroke="none" /></Ic>
        <button type="button" aria-label="Preenchimento" className="h-[31px] w-[31px] border border-[#a9a9a9] bg-white"><svg className="h-full w-full" viewBox="0 0 29 29"><path d="M1 28L28 1" stroke="#c8202a" strokeWidth="2" /></svg></button>
        <span className="ml-1.5">Nenhum</span>
      </div>
      <Ic className="shrink-0"><path d="M12 1L7.500 11l2 6h5l2-6zM12 1v10M9 18.500h6V23H9z" /><circle cx="12" cy="12" r="1.500" /></Ic>
      <button type="button" aria-label="Contorno" className="h-[31px] w-[31px] border border-[#a9a9a9] bg-black" />
      <span className="ml-1 shrink-0">R:0 G:0 B:0</span>
    </footer>
  );
}

export default function App() {
  return (
    <div className="flex h-screen flex-col overflow-hidden bg-black pt-7 pb-[29px] font-['Open_Sans',sans-serif] text-[16px] leading-[22px] text-[#1a1a1a]">
      <TitleBar />
      <nav aria-label="Menu principal" className="flex h-[31px] shrink-0 items-center gap-8 bg-[#d8d8d8] pl-[15px]">
        {menus.map(([a, b, c]) => <button type="button" key={a + b + c} className="shrink-0">{a}<u className="underline-offset-2">{b}</u>{c}</button>)}
      </nav>
      <StandardBar />
      <TextBar />
      <PropertyBar />
      <main className="flex min-h-0 flex-1">
        <Toolbox />
        <div className="flex min-w-0 flex-1 flex-col">
          <DocPalette />
          <div className="flex min-h-0 flex-1">
            <Workspace />
            <div className="flex w-[7px] shrink-0 justify-center bg-white"><div className="w-px bg-[#cfcfcf]" /></div>
            <Docker />
          </div>
        </div>
      </main>
      <StatusBar />
    </div>
  );
}
